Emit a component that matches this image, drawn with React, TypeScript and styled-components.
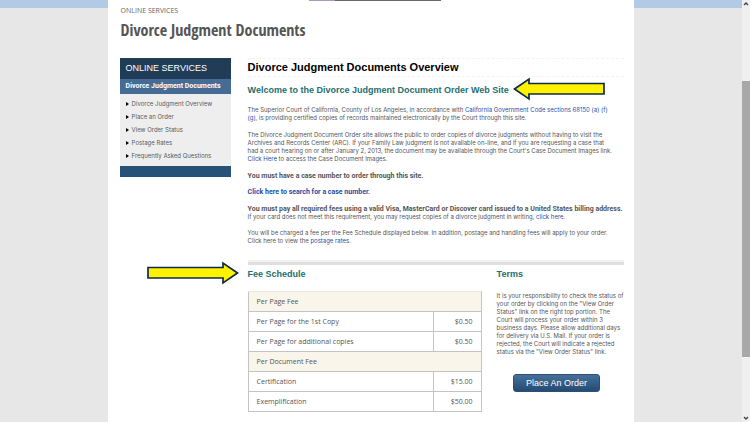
import React from "react";
import styled, { createGlobalStyle } from "styled-components";

const sans = `"Liberation Sans", Arial, sans-serif`;
const text = `Inter, "Liberation Sans", sans-serif`;
const strong = `Roboto, "Liberation Sans", sans-serif`;
const open = `"Open Sans", "Noto Sans", sans-serif`;

const GlobalStyle = createGlobalStyle`
  * { box-sizing: border-box; }
  body { margin: 0; background: #e7e7e7; color: #555; font: 6px/8px ${text}; }
  h1, h2, h3, p, ul { margin: 0; padding: 0; }
  b { font: 700 7px/7px ${strong}; }
`;

const Screen = styled.div`
  display: flex;
  height: 100vh;
  overflow: hidden;
`;

const Backdrop = styled.div`
  flex: 1;
  min-width: 0;
  display: flex;
  justify-content: center;
  background: linear-gradient(#b3cae7 8px, #e7e7e7 8px);
`;

const Page = styled.div`
  width: 71%;
  min-height: 100%;
  padding: 0 10px 0 12px;
  background: #fff;
`;

const LoadStrip = styled.div`
  height: 1px;
  width: 132px;
  margin-left: 189px;
  background: linear-gradient(90deg, #a99bc0 26px, #6a676b 26px);
`;

const PageHeader = styled.header`
  height: 57px;
  padding: 5px 1px 0;
  font-family: ${open};
`;

const Crumb = styled.p`
  font-size: 7px;
  line-height: 10px;
  color: #666;
`;

const PageTitle = styled.h1`
  margin-top: 2px;
  font: 700 16px/24px "Open Sans Condensed", "Open Sans", sans-serif;
  font-stretch: condensed;
  color: #555;
`;

const Columns = styled.div`
  display: grid;
  grid-template-columns: 111px minmax(0, 1fr);
  column-gap: 17px;
  align-items: start;
`;

const SideNav = styled.nav`
  background: #eee;
  border-bottom: 11px solid #275278;
`;

const NavTitle = styled.h2`
  padding: 0 6px;
  font: 400 9px/21px ${sans};
  color: #fff;
  background: #203c57;
`;

const NavSection = styled.h3`
  padding: 0 6px;
  font: 700 7px/15px ${strong};
  color: #fff;
  background: #446c94;
  white-space: nowrap;
`;

const NavList = styled.ul`
  padding: 3px 6px 4px;
  list-style: none;
`;

const NavLink = styled.a`
  display: flex;
  align-items: center;
  gap: 3px;
  line-height: 13px;
  color: #5a5a5a;
  text-decoration: none;
  white-space: nowrap;
  &::before {
    content: "";
    border: solid transparent;
    border-width: 2px 0 2px 3px;
    border-left-color: #000;
  }
`;

const Overview = styled.h2`
  height: 19px;
  border-top: 1px dashed #f3f3f3;
  border-bottom: 1px dashed #f3f3f3;
  font: 700 11px/16px ${sans};
  color: #000;
`;

const SubHeading = styled.h3`
  position: relative;
  font: 700 9px/12px ${sans};
  color: #236f70;
`;

const Intro = styled.section`
  padding-top: 7px;
`;

const Paragraph = styled.p<{ $gap?: number }>`
  margin-top: ${(p) => p.$gap ?? 8}px;
  white-space: nowrap;
`;

const Link = styled.a`
  color: #2450a8;
  text-decoration: none;
`;

const Divider = styled.hr`
  height: 5px;
  margin: 15px 0 0;
  border: 0;
  border-top: 2px solid #f1f1f1;
  background: #e0e0e0;
`;

const Lower = styled.div`
  display: grid;
  grid-template-columns: 234px minmax(0, 1fr);
  column-gap: 15px;
  padding-top: 3px;
`;

const FeeTable = styled.table`
  width: 100%;
  margin-top: 11px;
  border-collapse: collapse;
  border: 1px solid #c4c4c4;
  border-top-color: #eee9df;
  font: 7px/19px ${open};
`;

const GroupCell = styled.th`
  height: 20px;
  padding: 0 8px;
  text-align: left;
  font-weight: 500;
  background: #f9f5eb;
  border-bottom: 1px solid #c4c4c4;
`;

const Cell = styled.td<{ $price?: boolean }>`
  height: 20px;
  padding: 0 8px;
  width: ${(p) => (p.$price ? "48px" : "auto")};
  text-align: ${(p) => (p.$price ? "right" : "left")};
  border: 1px solid #c4c4c4;
`;

const Terms = styled.section`
  display: flex;
  flex-direction: column;
`;

const TermsText = styled.p`
  margin-top: 12px;
  white-space: nowrap;
`;

const OrderButton = styled.button`
  align-self: center;
  width: 87px;
  height: 18px;
  margin: 18px 8px 0 0;
  padding: 0;
  border: 1px solid #2b5077;
  border-radius: 3px;
  background: linear-gradient(#46709b, #244b72);
  color: #fff;
  font: 9px/16px ${sans};
`;

const ArrowSvg = styled.svg<{ $left: number }>`
  position: absolute;
  left: ${(p) => p.$left}px;
  top: -7px;
  width: 93px;
  height: 24px;
`;

const ScrollBar = styled.div`
  flex: 0 0 8px;
  display: flex;
  flex-direction: column;
  align-items: center;
  background: #f0f0f0;
`;

const Track = styled.div`
  flex: 1;
  width: 100%;
  display: flex;
  flex-direction: column;
`;

const Spacer = styled.div<{ $grow: number }>`
  flex: ${(p) => p.$grow};
`;

const Thumb = styled.div`
  flex: 276;
  background: #a8a8a8;
`;

const Chevron = ({ d }: { d: string }) => (
  <svg width="8" height="8" viewBox="0 0 8 8" fill="none" stroke="#444" strokeWidth="1.4">
    <path d={d} />
  </svg>
);

const Arrow = ({ left, points }: { left: number; points: string }) => (
  <ArrowSvg $left={left} viewBox="0 0 93 24" aria-hidden="true">
    <polygon points={points} fill="#fff200" stroke="#102b46" strokeWidth="1.7" />
  </ArrowSvg>
);

const navItems = [
  "Divorce Judgment Overview",
  "Place an Order",
  "View Order Status",
  "Postage Rates",
  "Frequently Asked Questions",
];

const fees = [
  { group: "Per Page Fee", rows: [["Per Page for the 1st Copy", "$0.50"], ["Per Page for additional copies", "$0.50"]] },
  { group: "Per Document Fee", rows: [["Certification", "$15.00"], ["Exemplification", "$50.00"]] },
];

export default function App() {
  return (
    <Screen>
      <GlobalStyle />
      <Backdrop>
        <Page>
          <LoadStrip />
          <PageHeader>
            <Crumb>ONLINE SERVICES</Crumb>
            <PageTitle>Divorce Judgment Documents</PageTitle>
          </PageHeader>
          <Columns>
            <SideNav>
              <NavTitle>ONLINE SERVICES</NavTitle>
              <NavSection>Divorce Judgment Documents</NavSection>
              <NavList>
                {navItems.map((item) => (
                  <li key={item}>
                    <NavLink href="#">{item}</NavLink>
                  </li>
                ))}
              </NavList>
            </SideNav>
            <main>
              <Overview>Divorce Judgment Documents Overview</Overview>
              <Intro>
                <SubHeading>
                  Welcome to the Divorce Judgment Document Order Web Site
                  <Arrow left={265} points="1.5,12 16,2 16,6.5 91,6.5 91,17 16,17 16,22" />
                </SubHeading>
                <Paragraph $gap={10}>
                  The Superior Court of California, County of Los Angeles, in accordance with{" "}
                  <Link href="#">California Government Code sections 68150 (a) (f)<br />(g)</Link>, is
                  providing certified copies of records maintained electronically by the Court through this site.
                </Paragraph>
                <Paragraph $gap={9}>
                  The Divorce Judgment Document Order site allows the public to order copies of divorce judgments without having to visit the<br />
                  Archives and Records Center (ARC). If your Family Law judgment is not available on-line, and if you are requesting a case that<br />
                  had a court hearing on or after January 2, 2013, the document may be available through the Court's Case Document Images link.<br />
                  <Link href="#">Click Here</Link> to access the Case Document Images.
                </Paragraph>
                <Paragraph $gap={9}><b>You must have a case number to order through this site.</b></Paragraph>
                <Paragraph><Link href="#"><b>Click here to search for a case number.</b></Link></Paragraph>
                <Paragraph $gap={9}>
                  <b>You must pay all required fees using a valid Visa, MasterCard or Discover card issued to a United States billing address.</b><br />
                  If your card does not meet this requirement, you may request copies of a divorce judgment in writing, <Link href="#">click here</Link>.
                </Paragraph>
                <Paragraph>
                  You will be charged a fee per the Fee Schedule displayed below. In addition, postage and handling fees will apply to your order.<br />
                  Click here to view the <Link href="#">postage rates</Link>.
                </Paragraph>
              </Intro>
              <Divider />
              <Lower>
                <section>
                  <SubHeading>
                    Fee Schedule
                    <Arrow left={-102} points="91.5,12 77,2 77,6.5 2,6.5 2,17 77,17 77,22" />
                  </SubHeading>
                  <FeeTable>
                    {fees.map(({ group, rows }) => (
                      <tbody key={group}>
                        <tr><GroupCell colSpan={2} scope="rowgroup">{group}</GroupCell></tr>
                        {rows.map(([name, price]) => (
                          <tr key={name}>
                            <Cell>{name}</Cell>
                            <Cell $price>{price}</Cell>
                          </tr>
                        ))}
                      </tbody>
                    ))}
                  </FeeTable>
                </section>
                <Terms>
                  <SubHeading>Terms</SubHeading>
                  <TermsText>
                    It is your responsibility to check the status of<br />
                    your order by clicking on the "View Order<br />
                    Status" link on the right top portion. The<br />
                    Court will process your order within 3<br />
                    business days. Please allow additional days<br />
                    for delivery via U.S. Mail. If your order is<br />
                    rejected, the Court will indicate a rejected<br />
                    status via the "View Order Status" link.
                  </TermsText>
                  <OrderButton type="button">Place An Order</OrderButton>
                </Terms>
              </Lower>
            </main>
          </Columns>
        </Page>
      </Backdrop>
      <ScrollBar>
        <Chevron d="M2 5 4 3 6 5" />
        <Track>
          <Spacer $grow={73} />
          <Thumb />
          <Spacer $grow={57} />
        </Track>
        <Chevron d="M2 3 4 5 6 3" />
      </ScrollBar>
    </Screen>
  );
}
